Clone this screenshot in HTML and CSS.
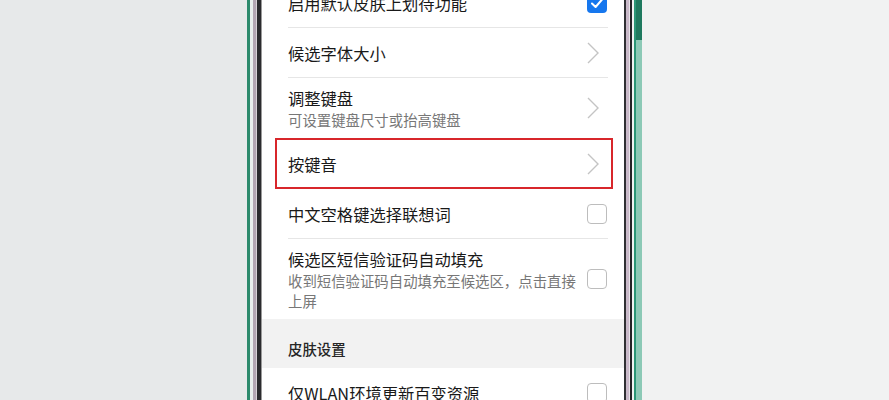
FILE: index.html
```html
<!DOCTYPE html>
<html lang="zh-CN">
<head>
<meta charset="utf-8">
<title>键盘设置</title>
<link rel="stylesheet" href="styles.css">
</head>
<body>
<div class="stage">
  <div class="bg bg-left"></div>
  <div class="frame-left">
    <div class="s s-green"></div>
    <div class="s s-light"></div>
    <div class="s s-pink"></div>
    <div class="s s-gap"></div>
    <div class="s s-dark"></div>
    <div class="s s-grey"></div>
  </div>
  <div class="screen">
    <div class="list">
      <div class="item">
        <div class="inner">
          <div class="text"><div class="title">启用默认皮肤上划待功能</div></div>
          <div class="ctrl"><span class="box checked"><svg viewBox="0 0 20 20" width="20" height="20"><polyline points="5,10.5 8.6,14 15,6.5" fill="none" stroke="#fff" stroke-width="2" stroke-linecap="round" stroke-linejoin="round"/></svg></span></div>
        </div>
      </div>
      <div class="item">
        <div class="inner">
          <div class="text"><div class="title">候选字体大小</div></div>
          <div class="ctrl"><svg class="chev" viewBox="0 0 12 22" width="12" height="22"><polyline points="1,1 11,11 1,21" fill="none" stroke="#c4c4c4" stroke-width="1.4"/></svg></div>
        </div>
      </div>
      <div class="item two">
        <div class="inner">
          <div class="text"><div class="title">调整键盘</div><div class="sub">可设置键盘尺寸或抬高键盘</div></div>
          <div class="ctrl"><svg class="chev" viewBox="0 0 12 22" width="12" height="22"><polyline points="1,1 11,11 1,21" fill="none" stroke="#c4c4c4" stroke-width="1.4"/></svg></div>
        </div>
      </div>
      <div class="item">
        <div class="inner">
          <div class="text"><div class="title">按键音</div></div>
          <div class="ctrl"><svg class="chev" viewBox="0 0 12 22" width="12" height="22"><polyline points="1,1 11,11 1,21" fill="none" stroke="#c4c4c4" stroke-width="1.4"/></svg></div>
        </div>
      </div>
      <div class="item">
        <div class="inner">
          <div class="text"><div class="title">中文空格键选择联想词</div></div>
          <div class="ctrl"><span class="box"></span></div>
        </div>
      </div>
      <div class="item three">
        <div class="inner last">
          <div class="text"><div class="title">候选区短信验证码自动填充</div><div class="sub">收到短信验证码自动填充至候选区，点击直接上屏</div></div>
          <div class="ctrl"><span class="box"></span></div>
        </div>
      </div>
      <div class="section">皮肤设置</div>
      <div class="item">
        <div class="inner">
          <div class="text"><div class="title">仅WLAN环境更新百变资源</div></div>
          <div class="ctrl"><span class="box"></span></div>
        </div>
      </div>
    </div>
    <div class="highlight"></div>
  </div>
  <div class="frame-right">
    <div class="s r-dark"></div>
    <div class="s r-pink"></div>
    <div class="s r-gap"></div>
    <div class="s r-dark2"></div>
    <div class="s r-light"></div>
    <div class="s r-green"></div>
    <div class="s r-teal"><div class="button"></div></div>
  </div>
  <div class="bg bg-right"></div>
</div>
</body>
</html>
```

FILE: styles.css
```css
html, body {
  margin: 0;
  padding: 0;
}
body {
  width: 889px;
  height: 400px;
  overflow: hidden;
  font-family: "Noto Sans CJK SC", "Noto Sans", sans-serif;
  background: #eceeee;
}
.stage {
  display: flex;
  height: 400px;
}
.bg-left {
  width: 247px;
  background: #e7e9ea;
}
.bg-right {
  flex: 1;
  background: #f1f2f2;
}
.frame-left, .frame-right {
  display: flex;
}
.s { height: 400px; }
.s-green { width: 3px; background: #2d8a6c; }
.s-light { width: 3px; background: #e9efee; }
.s-pink { width: 3px; background: #b3a6b3; }
.s-gap { width: 1px; background: #d8d2d8; }
.s-dark { width: 4px; background: #2b2b2e; }
.s-grey { width: 1px; background: #9a9a9a; }

.r-dark { width: 2px; background: #303033; }
.r-pink { width: 3px; background: #c9b9c9; }
.r-gap { width: 1px; background: #e8e2e8; }
.r-dark2 { width: 2px; background: #232326; }
.r-light { width: 2px; background: #eef3f2; }
.r-green { width: 2px; background: #2a9676; }
.r-teal { width: 6px; background: #8cc9b6; }
.button {
  height: 40px;
  background: #1f7a5f;
}

.screen {
  width: 362px;
  background: #fff;
  position: relative;
  overflow: hidden;
}
.list {
  margin-top: -22px;
}
.item {
  padding-left: 26px;
  padding-right: 16px;
}
.inner {
  height: 49px;
  display: flex;
  align-items: center;
  border-bottom: 1px solid #e6e6e6;
}
.inner.last {
  border-bottom: none;
}
.item.two .inner {
  height: 60px;
  align-items: flex-start;
}
.item.two .text { padding-top: 9px; }
.item.two .ctrl { align-self: center; }
.item.three .inner {
  height: 80px;
}
.item.three .text { padding-top: 9px; align-self: flex-start; }
.text {
  flex: 1;
  margin-right: 8px;
  min-width: 0;
}
.title {
  font-size: 16.3px;
  line-height: 22px;
  color: #191919;
  white-space: nowrap;
}
.sub {
  font-size: 14.4px;
  line-height: 19.5px;
  color: #777;
  margin-top: 1px;
}
.ctrl {
  width: 21px;
  display: flex;
  align-items: center;
}
.chev {
  display: block;
}
.box {
  display: block;
  width: 20px;
  height: 20px;
  box-sizing: border-box;
  border: 1.5px solid #bdbdbd;
  border-radius: 4px;
}
.box.checked {
  border: none;
  background: #1677ee;
}
.box svg { display: block; }
.section {
  background: #f2f2f2;
  height: 49px;
  box-sizing: border-box;
  padding: 20px 26px 0;
  font-size: 14.4px;
  line-height: 20px;
  color: #262626;
  font-weight: 500;
}
.highlight {
  position: absolute;
  left: 13px;
  top: 138px;
  width: 338px;
  height: 51px;
  box-sizing: border-box;
  border: 2px solid #d8262b;
}
```
